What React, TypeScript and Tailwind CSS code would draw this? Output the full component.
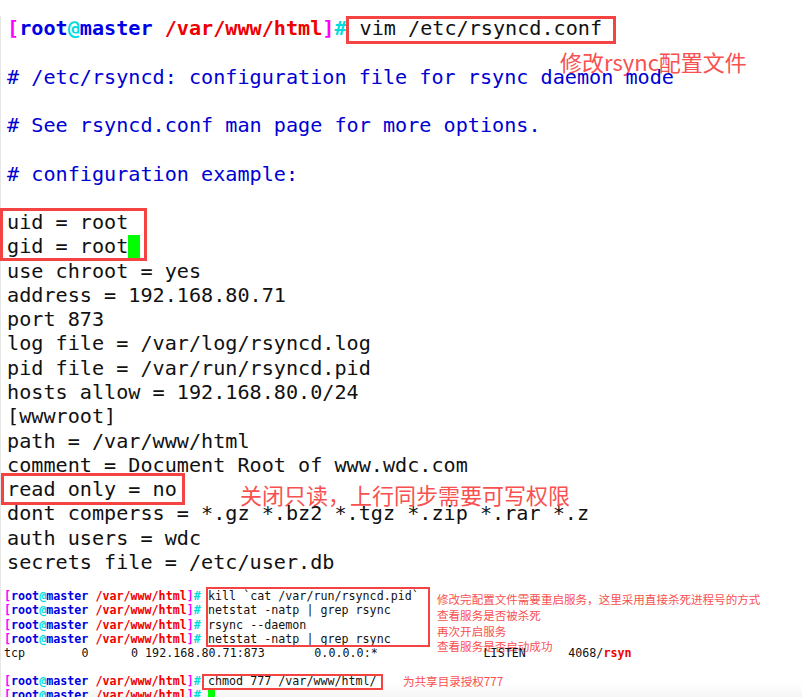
import React from "react";

const comments = [
  "# /etc/rsyncd: configuration file for rsync daemon mode",
  "# See rsyncd.conf man page for more options.",
  "# configuration example:",
];

const middleLines = [
  "use chroot = yes",
  "address = 192.168.80.71",
  "port 873",
  "log file = /var/log/rsyncd.log",
  "pid file = /var/run/rsyncd.pid",
  "hosts allow = 192.168.80.0/24",
  "[wwwroot]",
  "path = /var/www/html",
  "comment = Document Root of www.wdc.com",
];

const lastLines = [
  "dont comperss = *.gz *.bz2 *.tgz *.zip *.rar *.z",
  "auth users = wdc",
  "secrets file = /etc/user.db",
];

const commands = [
  "kill `cat /var/run/rsyncd.pid`",
  "netstat -natp | grep rsync",
  "rsync --daemon",
  "netstat -natp | grep rsync",
];

const notes = [
  "修改完配置文件需要重启服务\uFF0C这里采用直接杀死进程号的方式",
  "查看服务是否被杀死",
  "再次开启服务",
  "查看服务是否启动成功",
];

const Prompt: React.FC = () => (
  <span className="font-bold">
    <span className="text-[#ff00ff]">[</span>
    <span className="text-[#0000e6]">root</span>
    <span className="text-[#00dddd]">@</span>
    <span className="text-[#0000e6]">master </span>
    <span className="text-[#f00000]">/var/www/html</span>
    <span className="text-[#ff00ff]">]</span>
    <span className="text-[#00dddd]">#</span>
  </span>
);

const App: React.FC = () => {
  return (
    <div className="w-[802px] h-[697px] overflow-hidden pt-[16px] bg-linear-to-b from-white from-[98%] to-[#f5f5f5] font-['DejaVu_Sans_Mono',monospace] text-[#111111]">
      <div className="h-full border-l border-[#e6e6e6] whitespace-pre">
        <div className="pl-[6px] text-[20.15px] leading-[24.27px]">
          <div className="flex items-start h-[24.27px]">
            <Prompt />
            <span className="ml-[2px] mt-[3px] w-[264px] h-[22px] pl-[11px] leading-[18px] outline-3 outline-[#f44343]">
              vim /etc/rsyncd.conf
            </span>
          </div>
          <div className="h-[24.27px] pl-[553px] pt-[4.7px] font-['Noto_Sans_CJK_SC',sans-serif] text-[22px] leading-[32px] text-[#f95050]">
            修改rsync配置文件
          </div>

          {comments.map((line) => (
            <div key={line} className="h-[48.54px] text-[#0000d2]">
              {line}
            </div>
          ))}

          <div className="-ml-[5px] pl-[5px] w-[143px] outline-3 -outline-offset-1 outline-[#f44343]">
            <div>uid = root</div>
            <div className="flex items-start">
              gid = root
              <span className="mt-[0.5px] w-[12px] h-[23px] bg-[#00ff00]" />
            </div>
          </div>

          {middleLines.map((line) => (
            <div key={line}>{line}</div>
          ))}

          <div className="flex items-start h-[24.27px]">
            <span className="-ml-[3px] -mt-[1px] pl-[3px] w-[178px] h-[26px] leading-[26px] outline-3 outline-[#f44343]">
              read only = no
            </span>
            <span className="ml-[58px] mt-[1px] font-['Noto_Sans_CJK_SC',sans-serif] text-[22px] leading-[32px] text-[#f95050]">
              {"关闭只读\uFF0C上行同步需要可写权限"}
            </span>
          </div>

          {lastLines.map((line) => (
            <div key={line}>{line}</div>
          ))}
        </div>

        <div className="pl-[3px] pt-[15px] text-[11.68px] leading-[14.2px]">
          <div className="flex items-start h-[56.8px]">
            <div className="w-[197px]">
              {commands.map((command, idx) => (
                <div key={idx}>
                  <Prompt />
                </div>
              ))}
            </div>
            <div className="ml-[7px] w-[220px] h-[55.5px] outline-2 outline-[#f44343]">
              {commands.map((command, idx) => (
                <div key={idx}>{command}</div>
              ))}
            </div>
            <div className="ml-[9px] mt-[3px] font-['Noto_Sans_CJK_SC',sans-serif] text-[11.55px] leading-[15.7px] text-[#f95050]">
              {notes.map((note) => (
                <div key={note}>{note}</div>
              ))}
            </div>
          </div>

          <div className="tracking-[0.025px]">
            {"tcp        0      0 192.168.80.71:873       0.0.0.0:*               LISTEN      4068/"}
            <span className="font-bold text-[#f00000]">rsyn</span>
          </div>
          <div className="h-[14.2px]" />

          <div className="flex items-start h-[14.2px]">
            <div className="w-[197px]">
              <Prompt />
            </div>
            <span className="ml-[3px] mt-[1.6px] w-[177px] h-[12px] pl-[4px] leading-[11px] outline-2 outline-[#f44343]">
              chmod 777 /var/www/html/
            </span>
            <span className="ml-[22px] -mt-[1.4px] font-['Noto_Sans_CJK_SC',sans-serif] text-[11.55px] leading-[16px] text-[#f95050]">
              为共享目录授权777
            </span>
          </div>

          <div className="flex items-start">
            <Prompt />
            <span className="ml-[7px] mt-[2px] w-[7px] h-[14px] bg-[#00ff00]" />
          </div>
        </div>
      </div>
    </div>
  );
};

export default App;
